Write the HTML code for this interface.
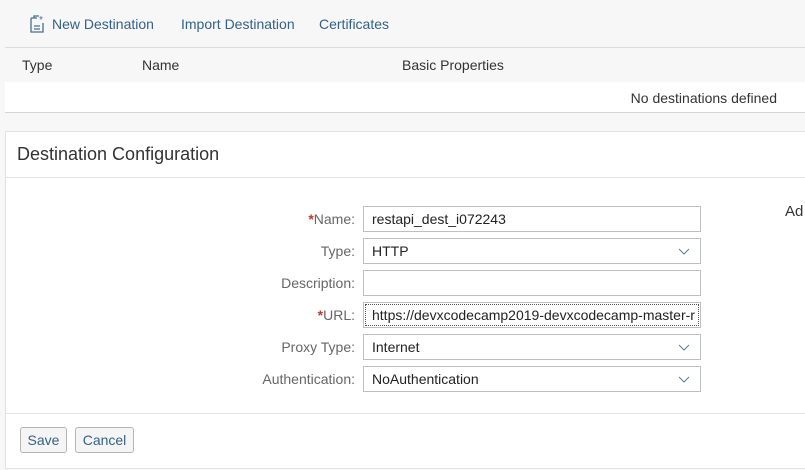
<!DOCTYPE html>
<html><head><style>
body{margin:0;width:805px;height:470px;background:#f7f7f7;font-family:"Liberation Sans",sans-serif;position:relative;overflow:hidden}
.a{position:absolute}
.tb{color:#346187;font-size:14px;top:16px}
.hdr{left:5px;top:47px;width:800px;height:34px;border-top:1px solid #dcdcdc;border-bottom:1px solid #dcdcdc;background:#f7f7f7}
.hdr span{position:absolute;top:9px;font-size:14px;color:#333}
.row{left:5px;top:82px;width:800px;height:30px;background:#fff;border-bottom:1px solid #d5d5d5}
.panel{left:5px;top:131px;width:805px;height:336px;background:#fff;border:1px solid #e2e2e2}
.lbl{font-size:14px;color:#666;text-align:right;width:200px;left:155px}
.lbl b{color:#c0392b;font-weight:bold}
.in{left:363px;border:1px solid #bfbfbf;background:#fff;font-size:14px;color:#222;line-height:24px;padding-left:8px;box-sizing:border-box;width:338px;height:26px}
.chev{position:absolute;right:10px;top:9px}
.btn{top:427px;height:24px;border:1px solid #b5b5b5;border-radius:3px;background:#f5f5f5;color:#346187;font-size:14px;line-height:24px;text-align:center}
</style></head><body>
<svg class="a" style="left:28px;top:14px" width="18" height="20" viewBox="0 0 18 20"><path d="M3 4h6M3 4v14h12V9M6 4V2h5" fill="none" stroke="#4a6f92" stroke-width="1.3"/><path d="M6 12h6M6 15h6" stroke="#4a6f92" stroke-width="1.2"/><text x="11" y="9" font-size="10" fill="#4a6f92" font-family="Liberation Sans">*</text></svg>
<div class="a tb" style="left:52px">New Destination</div>
<div class="a tb" style="left:181px">Import Destination</div>
<div class="a tb" style="left:319px">Certificates</div>
<div class="a hdr"><span style="left:17px">Type</span><span style="left:137px">Name</span><span style="left:397px">Basic Properties</span></div>
<div class="a row"><span class="a" style="right:28px;top:8px;font-size:14px;color:#333">No destinations defined</span></div>
<div class="a panel">
<div class="a" style="left:0;top:0;width:805px;height:45px;border-bottom:1px solid #e2e2e2"><span class="a" style="left:11px;top:12px;font-size:18px;color:#333">Destination Configuration</span></div>
<div class="a" style="left:0;top:281px;width:805px;border-top:1px solid #e2e2e2"></div>
</div>
<div class="a" style="left:785px;top:203px;font-size:15px;color:#333">Ad</div>
<div class="a lbl" style="top:211px"><b>*</b>Name:</div>
<div class="a lbl" style="top:243px">Type:</div>
<div class="a lbl" style="top:275px">Description:</div>
<div class="a lbl" style="top:307px"><b>*</b>URL:</div>
<div class="a lbl" style="top:339px">Proxy Type:</div>
<div class="a lbl" style="top:371px">Authentication:</div>
<div class="a in" style="top:206px">restapi_dest_i072243</div>
<div class="a in" style="top:238px">HTTP<svg class="chev" width="12" height="7"><path d="M1 1l5 5 5-5" fill="none" stroke="#5b7ea0" stroke-width="1"/></svg></div>
<div class="a in" style="top:270px"></div>
<div class="a in" style="top:302px;outline:1px dotted #555;outline-offset:-3px;overflow:hidden;white-space:nowrap">https://devxcodecamp2019-devxcodecamp-master-r</div>
<div class="a in" style="top:334px">Internet<svg class="chev" width="12" height="7"><path d="M1 1l5 5 5-5" fill="none" stroke="#5b7ea0" stroke-width="1"/></svg></div>
<div class="a in" style="top:366px">NoAuthentication<svg class="chev" width="12" height="7"><path d="M1 1l5 5 5-5" fill="none" stroke="#5b7ea0" stroke-width="1"/></svg></div>
<div class="a btn" style="left:20px;width:45px">Save</div>
<div class="a btn" style="left:75px;width:57px">Cancel</div>
</body></html>
